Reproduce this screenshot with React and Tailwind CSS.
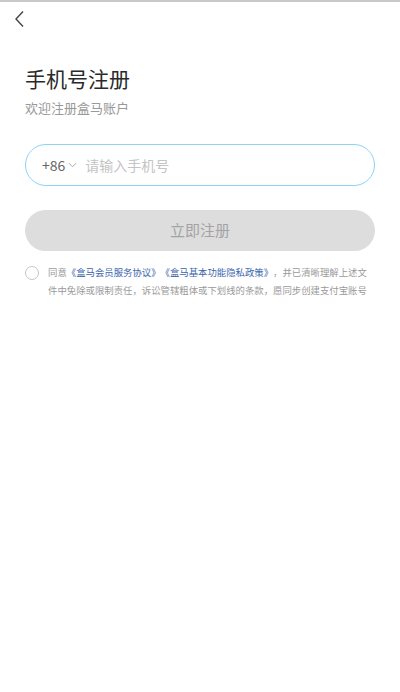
import React, { useState } from "react";

const font = {
  fontFamily: '"Noto Sans CJK SC", "Noto Sans", sans-serif',
};

const RegisterPage = () => {
  const [phone, setPhone] = useState("");
  const [agreed, setAgreed] = useState(false);

  return (
    <div
      className="min-h-[692px] w-[400px] bg-white border-t-2 border-[#c8c8c8]"
      style={font}
    >
      {/* back */}
      <div className="h-[30px] pl-[13px] pt-[8px]">
        <svg
          className="w-[14px] h-[18px] text-[#444]"
          viewBox="0 0 14 18"
          fill="none"
          stroke="currentColor"
        >
          <path d="M10 1.5 3 9l7 7.5" strokeWidth={1.4} />
        </svg>
      </div>

      <div className="px-[25px]">
        <h1 className="mt-[32px] text-[21px] leading-[28px] text-[#2a2a2a] font-normal">
          手机号注册
        </h1>
        <p className="mt-[7px] text-[13px] leading-[18px] text-[#999]">
          欢迎注册盒马账户
        </p>

        <div className="mt-[27px] h-[42px] rounded-full border border-[#8ed3f5] flex items-center pl-[16px] pr-4">
          <span className="text-[14px] text-[#666]">+86</span>
          <svg
            className="ml-[3px] w-[9px] h-[6px] text-[#aaa]"
            viewBox="0 0 9 6"
            fill="none"
            stroke="currentColor"
          >
            <path d="M1 1.2 4.5 4.8 8 1.2" strokeWidth={1} />
          </svg>
          <input
            value={phone}
            onChange={(e) => setPhone(e.target.value)}
            placeholder="请输入手机号"
            className="ml-[8px] flex-1 bg-transparent outline-none text-[14px] text-[#333] placeholder:text-[#c4c4c4]"
            style={font}
          />
        </div>

        <button
          className="mt-[24px] w-full h-[41px] rounded-full bg-[#dddddd] text-[15px] text-[#a3a3a3]"
          style={font}
        >
          立即注册
        </button>

        <div className="mt-[14px] flex items-start">
          <button
            onClick={() => setAgreed(!agreed)}
            className="mt-[1px] w-[14px] h-[14px] shrink-0 rounded-full border border-[#c6c6c6] bg-white"
          ></button>
          <div className="ml-[9px] text-[9.4px] leading-[18px] text-[#9a9a9a] -mt-[2px] whitespace-nowrap [text-spacing-trim:space-all]">
            <p>
              同意<span className="text-[#3b66ad]">《盒马会员服务协议》《盒马基本功能隐私政策》</span>，并已清晰理解上述文
            </p>
            <p>件中免除或限制责任，诉讼管辖粗体或下划线的条款，愿同步创建支付宝账号</p>
          </div>
        </div>
      </div>
    </div>
  );
};

export default function App() {
  return <RegisterPage />;
}
